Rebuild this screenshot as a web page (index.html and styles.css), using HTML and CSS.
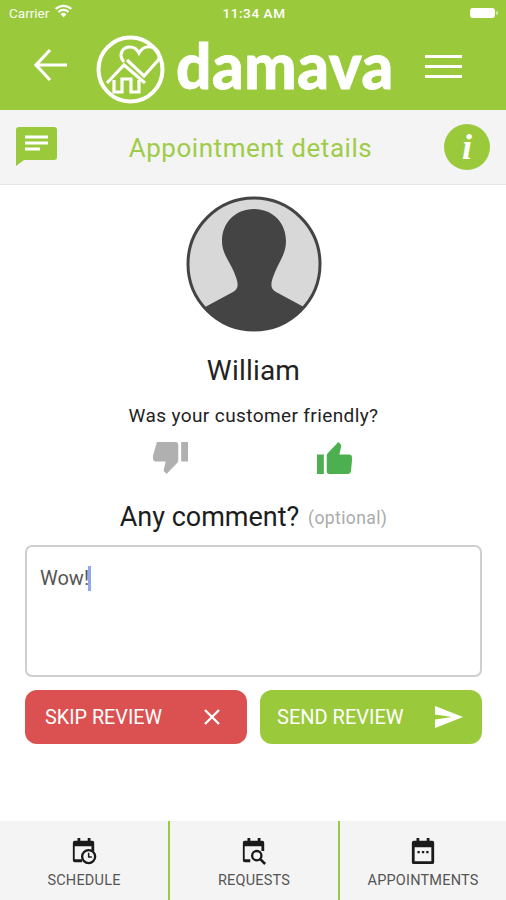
FILE: index.html
```html
<!DOCTYPE html>
<html lang="en">
<head>
<meta charset="utf-8">
<title>Appointment details</title>
<link rel="stylesheet" href="styles.css">
</head>
<body>
<div class="app">
  <header class="top">
    <div class="status">
      <div class="status-left">
        <span>Carrier</span>
        <svg class="wifi" viewBox="0 0 20 15"><path d="M10 14.500 6.800 11a4.600 4.600 0 0 1 6.400 0z" fill="#fff"/><path d="M4.600 8.600a7.700 7.700 0 0 1 10.800 0M1.600 5.400a12 12 0 0 1 16.800 0" fill="none" stroke="#fff" stroke-width="2.400"/></svg>
      </div>
      <span class="time">11:34 AM</span>
      <svg class="battery" viewBox="0 0 30 12"><rect x="1" y="1" width="25" height="10" rx="3" fill="#fff"/><rect x="27" y="4" width="2" height="4" rx="1" fill="#fff" opacity=".5"/></svg>
    </div>
    <div class="brandbar">
      <svg class="back" viewBox="0 0 36 34"><path d="M34 17H3M17 2 3 17l14 15" fill="none" stroke="#fff" stroke-width="3.200"/></svg>
      <div class="brand">
        <svg class="logo" viewBox="0 0 70 70">
          <circle cx="34.500" cy="34.500" r="32" fill="none" stroke="#fff" stroke-width="4"/>
          <path d="M28 27C22 20 26 12 34 12 38 12 41 14 43 18 46 13 50 11 55 12 62 13 65 20 62 26M65 22 48 41 31 25" fill="none" stroke="#fff" stroke-width="3.200"/>
          <path d="M11 48 28 30l21 18" fill="none" stroke="#fff" stroke-width="3.200"/>
          <path d="M18 45v12h8V44h9v13h8V45" fill="none" stroke="#fff" stroke-width="3.200"/>
        </svg>
        <span class="wordmark">damava</span>
      </div>
      <div class="burger"><i></i><i></i><i></i></div>
    </div>
  </header>
  <div class="subbar">
    <svg class="chat" viewBox="0 0 41 39"><path d="M3 0h35a3 3 0 0 1 3 3v27a3 3 0 0 1-3 3H8l-8 6V3a3 3 0 0 1 3-3z" fill="#9aca3c"/><path d="M9 10h23M9 16h23M9 22h15" stroke="#fff" stroke-width="3"/></svg>
    <h1 class="title">Appointment details</h1>
    <div class="info">i</div>
  </div>
  <main class="content">
    <svg class="avatar" viewBox="0 0 136 136">
      <defs><clipPath id="disc"><circle cx="68" cy="68" r="66"/></clipPath></defs>
      <circle cx="68" cy="68" r="66" fill="#d8d8d8"/>
      <path clip-path="url(#disc)" d="M68 13C49 13 36 27 36 45 36 58 44 66 48 76 52 86 54 92 47 96L21 110 0 125V140H136V125L116 110 90 96C83 92 85 86 89 76 93 66 100 58 100 45 100 27 87 13 68 13z" fill="#444"/>
      <circle cx="68" cy="68" r="66" fill="none" stroke="#444" stroke-width="3"/>
    </svg>
    <div class="name">William</div>
    <div class="question">Was your customer friendly?</div>
    <div class="thumbs">
      <svg class="thumb" viewBox="0 0 36 34"><path d="M29 0h7v20h-7zM4 0h19c2 0 3 1 3 3v16c0 1-.5 2-1 2.500L14 33l-2-2c-.5-.5-1-1.500-1-2l2-9H3c-2 0-3-1-3-3v-3z" fill="#b0b0b0"/></svg>
      <svg class="thumb" viewBox="0 0 36 34"><path d="M0 13h7v20H0zM32 33H13c-2 0-3-1-3-3V14c0-1 .5-2 1-2.500L22 0l2 2c.5.5 1 1.500 1 2l-2 9h10c2 0 3 1 3 3v3l-1 11c-.500 2-1.500 3-3 3z" fill="#4caf50"/></svg>
    </div>
    <div class="comment-head">Any comment? <span class="optional">(optional)</span></div>
    <div class="comment-box"><span class="typed">Wow!</span><span class="caret"></span></div>
    <div class="actions">
      <button class="btn skip"><span>SKIP REVIEW</span>
        <svg class="btn-icon" viewBox="0 0 18 18"><path d="M2 2l14 14M16 2 2 16" stroke="#fff" stroke-width="2.400" fill="none"/></svg>
      </button>
      <button class="btn send"><span>SEND REVIEW</span>
        <svg class="send-icon" viewBox="0 0 28 22"><path d="M0 0l28 11L0 22v-8.500L17 11 0 8.500z" fill="#fff"/></svg>
      </button>
    </div>
  </main>
  <nav class="tabs">
    <div class="tab">
      <svg class="tab-icon" viewBox="0 0 28 28"><path d="M4 3h3V0h3v3h8V0h3v3h2a2 2 0 0 1 2 2v9h-3V9H4v14h8v3H4a2 2 0 0 1-2-2V5a2 2 0 0 1 2-2z" fill="#1a1a1a"/><circle cx="19" cy="20" r="7" fill="none" stroke="#1a1a1a" stroke-width="2.500"/><path d="M19 16v4.500h3.500" fill="none" stroke="#1a1a1a" stroke-width="1.600"/></svg>
      <span>SCHEDULE</span>
    </div>
    <div class="tab">
      <svg class="tab-icon" viewBox="0 0 28 28"><path d="M4 3h3V0h3v3h8V0h3v3h2a2 2 0 0 1 2 2v9h-3V9H4v14h6v3H4a2 2 0 0 1-2-2V5a2 2 0 0 1 2-2z" fill="#1a1a1a"/><circle cx="17" cy="19" r="5" fill="none" stroke="#1a1a1a" stroke-width="2.500"/><path d="M21 23l5 5" stroke="#1a1a1a" stroke-width="2.800"/></svg>
      <span>REQUESTS</span>
    </div>
    <div class="tab">
      <svg class="tab-icon" viewBox="0 0 28 28"><path d="M4 3h3V0h3v3h8V0h3v3h3a2 2 0 0 1 2 2v21a2 2 0 0 1-2 2H4a2 2 0 0 1-2-2V5a2 2 0 0 1 2-2zm1 7v15h18V10z" fill="#1a1a1a" fill-rule="evenodd"/><path d="M8 14h2.500v2.500H8zM12.800 14h2.500v2.500h-2.500zM17.500 14H20v2.500h-2.500z" fill="#1a1a1a"/></svg>
      <span>APPOINTMENTS</span>
    </div>
  </nav>
</div>
</body>
</html>
```
FILE: styles.css
```css
* { box-sizing: border-box; }
html, body { margin: 0; padding: 0; }
body { font-family: Roboto, "Liberation Sans", sans-serif; background: #fff; }
.app { width: 506px; height: 900px; display: flex; flex-direction: column; overflow: hidden; }

.top { height: 110px; background: #9aca3c; color: #fff; display: flex; flex-direction: column; }
.status { height: 26px; padding: 0 7px 0 9px; display: grid; grid-template-columns: 1fr auto 1fr; align-items: center; font-size: 13.500px; }
.status-left { display: flex; align-items: center; gap: 5px; opacity: .95; }
.wifi { width: 19px; height: 14px; margin-bottom: 4px; }
.time { font-weight: 500; letter-spacing: .6px; }
.battery { width: 30px; height: 12px; justify-self: end; }
.brandbar { height: 84px; display: flex; align-items: center; padding: 0 0 0 33px; }
.back { width: 36px; height: 34px; margin-bottom: 7px; }
.brand { display: flex; align-items: center; margin-left: 27px; margin-top: 4px; gap: 10px; }
.logo { width: 70px; height: 70px; }
.wordmark { font-family: Lato, sans-serif; font-weight: 900; font-size: 62px; line-height: 70px; letter-spacing: .6px; -webkit-text-stroke: .8px #fff; position: relative; top: -5px; }
.burger { width: 37px; margin-left: 31px; margin-bottom: 4px; display: flex; flex-direction: column; gap: 7px; }
.burger i { display: block; height: 3px; background: #fff; }

.subbar { height: 75px; background: #f4f4f4; border-bottom: 1px solid #e6e6e6; display: flex; align-items: center; padding: 0 16px; }
.chat { width: 41px; height: 39px; flex: none; margin-bottom: 2px; }
.title { flex: 1; margin: 0; font-size: 26px; font-weight: 400; color: #9fcc48; text-align: center; letter-spacing: .55px; padding-top: 2px; }
.info { width: 46px; height: 46px; flex: none; border-radius: 50%; background: #9aca3c; color: #fff; font-family: "Liberation Serif", serif; font-weight: 700; font-style: italic; font-size: 36px; line-height: 46px; text-align: center; }

.content { flex: 1; display: flex; flex-direction: column; align-items: center; padding: 11px 24px 0 25px; }
.avatar { width: 136px; height: 136px; display: block; }
.name { font-size: 28px; line-height: 34px; margin-top: 22px; color: #222; letter-spacing: .2px; }
.question { font-size: 19px; line-height: 22px; margin-top: 17px; color: #222; letter-spacing: .4px; }
.thumbs { display: flex; gap: 129px; margin-top: 15px; padding-right: 3px; }
.thumb { width: 35px; height: 33px; display: block; }
.comment-head { height: 32px; font-size: 27px; line-height: 32px; margin-top: 26px; color: #1d1d1d; }
.optional { font-size: 17.500px; color: #aaa; margin-left: 2px; letter-spacing: .4px; vertical-align: 2px; }
.comment-box { width: 457px; height: 132px; margin-top: 12px; background: #fff; border: 2px solid #cfcfcf; border-radius: 7px; padding: 19px 13px; display: flex; align-items: flex-start; font-size: 20px; line-height: 24px; color: #555; }
.caret { width: 3px; height: 25px; background: #93a8ec; margin-left: -1px; }
.actions { width: 457px; display: grid; grid-template-columns: 1fr 1fr; gap: 13px; margin-top: 13px; }
.btn { height: 54px; border: 0; border-radius: 12px; color: #fff; font-family: inherit; font-size: 20px; display: flex; align-items: center; justify-content: space-between; }
.skip { background: #db5050; padding: 0 26px 0 20px; font-size: 19.800px; }
.send { background: #9aca3c; padding: 0 19px 0 17px; }
.btn-icon { width: 18px; height: 18px; }
.send-icon { width: 28px; height: 22px; }

.tabs { height: 79px; background: #f4f4f4; display: grid; grid-template-columns: 168px 170px 168px; }
.tab { display: flex; flex-direction: column; align-items: center; padding-top: 16px; font-size: 14.500px; color: #555; letter-spacing: .2px; gap: 7px; }
.tab + .tab { border-left: 2px solid #9aca3c; }
.tab-icon { width: 26px; height: 28px; }
```
